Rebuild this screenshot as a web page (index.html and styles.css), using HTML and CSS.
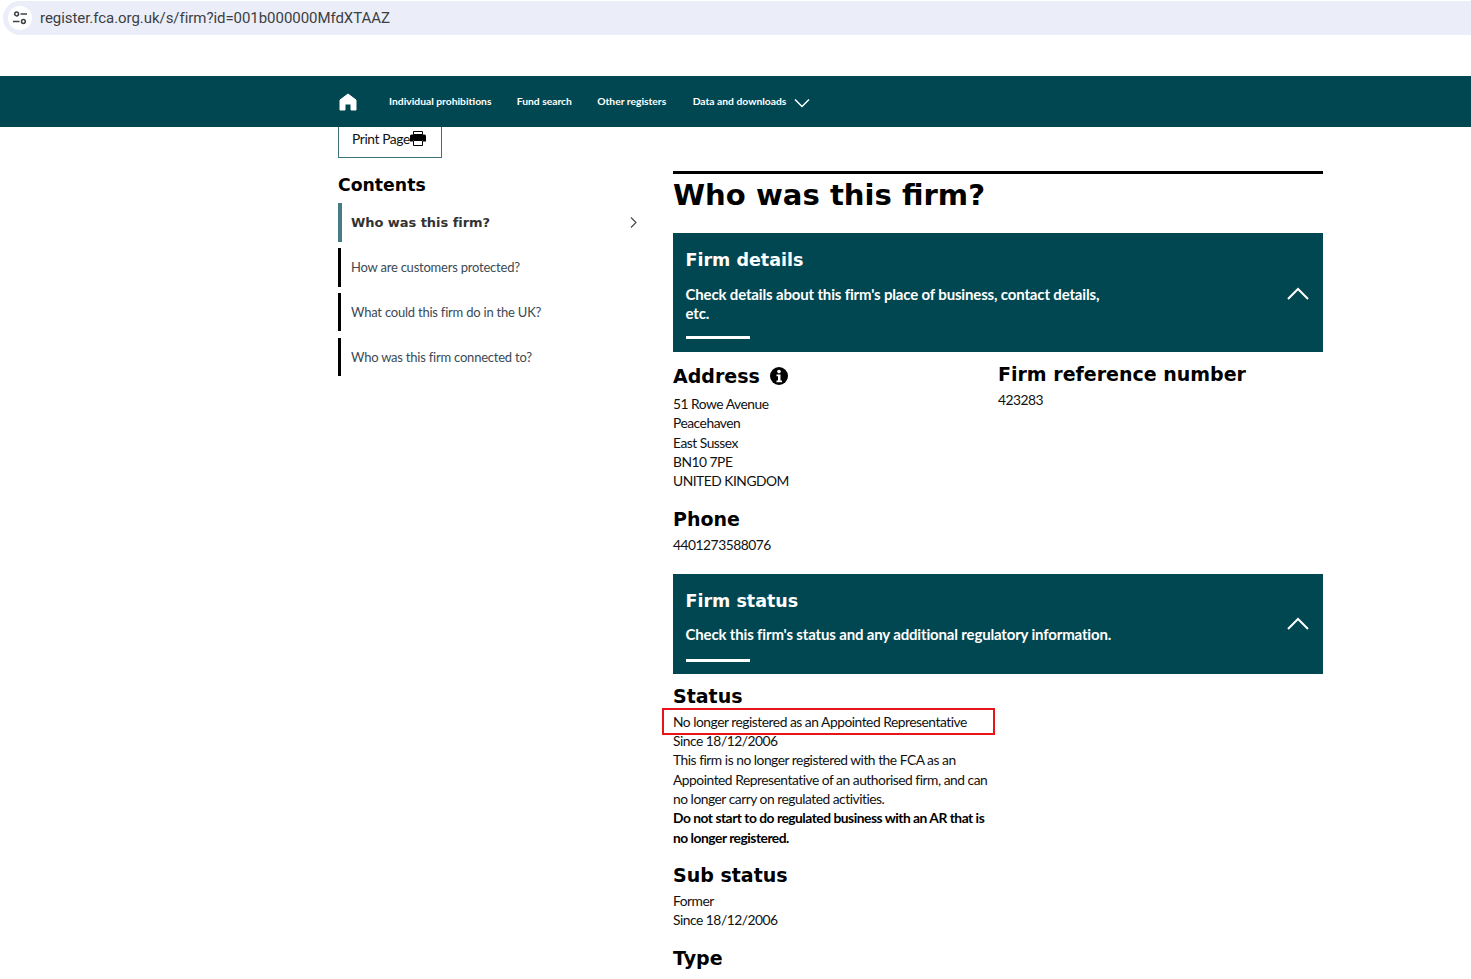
FILE: index.html
```html
<!DOCTYPE html>
<html lang="en">
<head>
<meta charset="utf-8">
<title>Firm details</title>
<link rel="stylesheet" href="styles.css">
</head>
<body>
<div class="urlbar">
  <span class="tune">
    <svg width="16" height="16" viewBox="0 0 16 16" fill="none" stroke="#3c4043" stroke-width="1.5"><circle cx="4.6" cy="4" r="1.9"/><path d="M8.5 4h6.5"/><path d="M1 11.5h6.5"/><circle cx="11.4" cy="11.5" r="1.9"/></svg>
  </span>
  <span class="url">register.fca.org.uk/s/firm?id=001b000000MfdXTAAZ</span>
</div>
<nav class="nav">
  <div class="nav-inner">
    <svg class="home" width="18" height="18" viewBox="0 0 18 18"><path fill="#fff" stroke="#fff" stroke-linejoin="round" d="M9 1 17 7v10h-5V11H6v6H1V7z"/></svg>
    <a class="nav-link">Individual prohibitions</a>
    <a class="nav-link">Fund search</a>
    <a class="nav-link">Other registers</a>
    <a class="nav-link nav-drop">Data and downloads</a>
    <svg class="nav-chev" width="16" height="10" viewBox="0 0 16 10" fill="none" stroke="#fff" stroke-width="1.500"><path d="M1 1.500 8 8.500 15 1.500"/></svg>
  </div>
</nav>
<div class="page">
  <aside class="side">
    <div class="print">Print Page<svg width="16" height="15" viewBox="0 0 16 15"><path d="M3.500 0.500h9v3h-9z" fill="none" stroke="#000"/><path d="M1.500 3.500h13A1.500 1.500 0 0 1 16 5v5.500h-3V9H3v1.500H0V5a1.500 1.500 0 0 1 1.500-1.500z"/><path d="M3.500 9.500h9v5h-9z" fill="#fff" stroke="#000"/></svg></div>
    <h2 class="contents">Contents</h2>
    <ul class="toc">
      <li class="toc-item toc-active"><span>Who was this firm?</span>
        <svg width="7" height="11" viewBox="0 0 7 11" fill="none" stroke="#444" stroke-width="1.100"><path d="M1 .5 6 5.500 1 10.500"/></svg></li>
      <li class="toc-item toc-tall">How are customers protected?</li>
      <li class="toc-item">What could this firm do in the UK?</li>
      <li class="toc-item">Who was this firm connected to?</li>
    </ul>
  </aside>
  <main class="main">
    <h1 class="title">Who was this firm?</h1>
    <section class="panel panel-details">
      <div class="panel-text">
        <h2 class="panel-title">Firm details</h2>
        <p class="panel-desc">Check details about this firm's place of business, contact details, etc.</p>
        <div class="panel-rule"></div>
      </div>
      <svg class="panel-chev" width="22" height="13" viewBox="0 0 22 13" fill="none" stroke="#fff" stroke-width="2"><path d="M1 12 11 2 21 12"/></svg>
    </section>
    <div class="two-col">
      <div class="col">
        <h3 class="h-sec h-address">Address
          <svg class="info" width="18" height="18" viewBox="0 0 18 18"><circle cx="9" cy="9" r="9"/><circle cx="9" cy="4.600" r="1.800" fill="#fff"/><path fill="#fff" d="M6.500 7.500h4v6h1.500v1.800H6.500v-1.800H8V9.300H6.500z"/></svg>
        </h3>
        <p class="body-text">51 Rowe Avenue<br>Peacehaven<br>East Sussex<br>BN10 7PE<br>UNITED KINGDOM</p>
        <h3 class="h-sec h-phone">Phone</h3>
        <p class="body-text">4401273588076</p>
      </div>
      <div class="col">
        <h3 class="h-sec h-frn">Firm reference number</h3>
        <p class="body-text">423283</p>
      </div>
    </div>
    <section class="panel panel-status">
      <div class="panel-text">
        <h2 class="panel-title">Firm status</h2>
        <p class="panel-desc panel-desc-wide">Check this firm's status and any additional regulatory information.</p>
        <div class="panel-rule rule-status"></div>
      </div>
      <svg class="panel-chev" width="22" height="13" viewBox="0 0 22 13" fill="none" stroke="#fff" stroke-width="2"><path d="M1 12 11 2 21 12"/></svg>
    </section>
    <div class="status">
      <h3 class="h-sec h-status">Status</h3>
      <div class="status-body">
        <div class="redbox"></div>
        <p class="body-text">No longer registered as an Appointed Representative<br>Since 18/12/2006<br>This firm is no longer registered with the FCA as an Appointed Representative of an authorised firm, and can no longer carry on regulated activities.<br><strong class="warn">Do not start to do regulated business with an AR that is no longer registered.</strong></p>
      </div>
      <h3 class="h-sec h-sub">Sub status</h3>
      <p class="body-text">Former<br>Since 18/12/2006</p>
      <h3 class="h-sec h-type">Type</h3>
    </div>
  </main>
</div>
</body>
</html>
```
FILE: styles.css
```css
* { box-sizing: border-box; }
html, body { margin: 0; padding: 0; height: 979px; overflow: hidden; background: #fff; }
body { font-family: "Lato", "Liberation Sans", sans-serif; color: #000; font-size: 14px; }
h1, h2, h3, p, ul { margin: 0; padding: 0; }

.urlbar { height: 34px; margin-top: 1px; margin-left: 3px; padding-left: 5px; background: #ebeef8; border-radius: 17px 0 0 17px; display: flex; align-items: center; }
.tune { width: 24px; height: 24px; border-radius: 50%; background: #fff; display: flex; align-items: center; justify-content: center; }
.url { margin-left: 8px; font-family: "Roboto", "Liberation Sans", sans-serif; font-size: 15px; color: #3c4043; letter-spacing: -0.05px; }

.nav { margin-top: 41px; height: 51px; background: #014751; }
.nav-inner { margin-left: 338px; height: 100%; display: flex; align-items: center; }
.home { margin-left: 1px; margin-right: 32px; }
.nav-link { font-size: 10.300px; font-weight: 700; color: #fff; margin-right: 25.300px; margin-bottom: 1px; white-space: nowrap; }
.nav-link:nth-of-type(3) { margin-right: 26.500px; }
.nav-drop { margin-right: 8px; }
.nav-chev { margin-top: 2px; }

.page { margin-left: 338px; width: 985px; display: flex; align-items: flex-start; }
.side { width: 335px; flex: none; }
.print { width: 104px; height: 31px; border: 1px solid #40727a; border-top: 0; display: flex; align-items: center; justify-content: flex-start; padding-left: 13px; padding-bottom: 7px; font-size: 13.800px; letter-spacing: -0.4px; color: #111; }
.contents { margin-top: 15px; font-family: "DejaVu Sans", sans-serif; font-size: 17.300px; line-height: 24px; font-weight: 700; }
.toc { list-style: none; margin-top: 6px; width: 303px; }
.toc-item { height: 38px; margin-bottom: 7px; border-left: 3px solid #000; padding-left: 10px; padding-bottom: 1px; display: flex; align-items: center; justify-content: space-between; font-size: 13px; color: #3b4a54; letter-spacing: -0.22px; }
.toc-tall { height: 39px; margin-bottom: 6px; }
.toc-active { height: 39px; margin-bottom: 6px; border-left: 4px solid #467c85; padding-left: 9px; padding-right: 4px; padding-bottom: 0; font-family: "DejaVu Sans", sans-serif; font-size: 13px; font-weight: 700; color: #333; letter-spacing: -0.05px; }

.main { width: 650px; flex: none; margin-top: 44px; }
.title { border-top: 3px solid #000; font-family: "DejaVu Sans", sans-serif; font-size: 29.100px; line-height: 42px; font-weight: 700; height: 62px; }
.panel { background: #014751; color: #fff; display: flex; justify-content: space-between; align-items: flex-start; padding: 0 14px 0 12.500px; }
.panel-details { height: 119px; }
.panel-status { height: 100px; margin-top: 19px; }
.panel-text { width: 425px; padding-top: 15px; }
.panel-title { font-family: "DejaVu Sans", sans-serif; font-size: 17.500px; line-height: 25px; font-weight: 700; }
.panel-desc { margin-top: 11.500px; font-size: 15px; line-height: 19px; font-weight: 700; letter-spacing: -0.16px; }
.panel-desc-wide { white-space: nowrap; }
.panel-rule { width: 64px; height: 3px; background: #fff; margin-top: 13.500px; }
.rule-status { margin-top: 14.500px; }
.panel-chev { margin-top: 53.500px; }
.panel-status .panel-chev { margin-top: 43.500px; }

.two-col { display: flex; }
.col { width: 325px; }
.h-sec { font-family: "DejaVu Sans", sans-serif; font-size: 19px; line-height: 26px; font-weight: 700; }
.h-address { margin-top: 11px; display: flex; align-items: center; gap: 10px; }
.h-frn { margin-top: 9px; }
.body-text { margin-top: 3px; font-size: 13.800px; line-height: 19.300px; color: #111; letter-spacing: -0.48px; }
.col .h-address + .body-text { margin-top: 5px; }
.h-phone { margin-top: 15.500px; }
.h-phone + .body-text { margin-top: 3.500px; }

.status { width: 320px; }
.h-status { margin-top: 9px; }
.status-body { position: relative; }
.redbox { position: absolute; left: -11px; top: -4px; width: 333px; height: 27px; border: 2px solid #e8141c; pointer-events: none; }
.warn { font-weight: 700; color: #000; }
.h-sub { margin-top: 15px; }
.h-type { margin-top: 15.500px; }
```
